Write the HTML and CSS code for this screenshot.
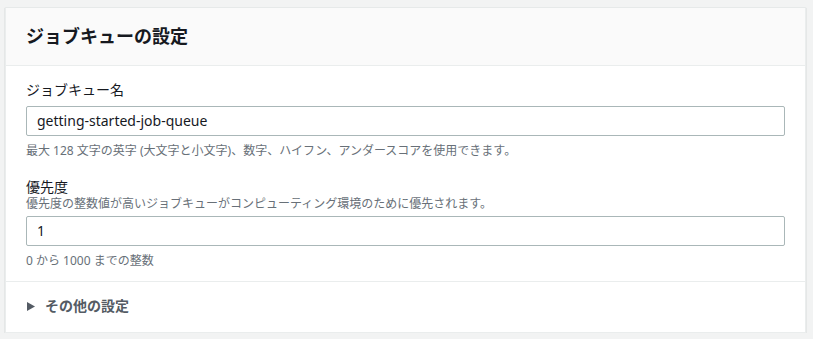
FILE: index.html
```html
<!DOCTYPE html>
<html lang="ja">
<head>
<meta charset="utf-8">
<link rel="stylesheet" href="styles.css">
</head>
<body>
<div class="card">
  <div class="card-header">
    <h2 class="title">ジョブキューの設定</h2>
  </div>
  <div class="card-body">
    <div class="field">
      <label class="label">ジョブキュー名</label>
      <div class="input">getting-started-job-queue</div>
      <div class="hint">最大 128 文字の英字 (大文字と小文字)、数字、ハイフン、アンダースコアを使用できます。</div>
    </div>
    <div class="field field-second">
      <label class="label label-tight">優先度</label>
      <div class="desc">優先度の整数値が高いジョブキューがコンピューティング環境のために優先されます。</div>
      <div class="input">1</div>
      <div class="hint">0 から 1000 までの整数</div>
    </div>
  </div>
  <div class="card-footer">
    <svg class="caret" width="8" height="9" viewBox="0 0 8 9"><polygon points="0,0 8,4.5 0,9" fill="#545b64"/></svg>
    <span class="expand">その他の設定</span>
  </div>
</div>
</body>
</html>
```

FILE: styles.css
```css
html, body {
  margin: 0;
  padding: 0;
  background: #f2f3f3;
}
body {
  padding: 7px 7px 0 5px;
  font-family: "Noto Sans", "Noto Sans CJK JP", sans-serif;
  color: #16191f;
}
.card {
  background: #fff;
  border: 1px solid #eaeded;
  border-top: 1px solid #e6e9e9;
  box-shadow: 0 1px 1px 0 rgba(0, 28, 36, 0.3);
}
.card-header {
  background: #fafafa;
  border-bottom: 1px solid #eaeded;
  padding: 17px 20px 18px 20px;
}
.title {
  margin: 0;
  font-size: 18px;
  line-height: 22px;
  font-weight: 700;
  color: #16191f;
}
.card-body {
  padding: 13px 20px 12px 20px;
  border-bottom: 1px solid #eaeded;
}
.field {
  display: flex;
  flex-direction: column;
}
.field-second {
  margin-top: 19px;
}
.label {
  font-size: 14px;
  line-height: 22px;
  margin-bottom: 5px;
}
.label-tight {
  line-height: 18px;
  margin-bottom: 0;
}
.desc {
  font-size: 12px;
  line-height: 16px;
  color: #687078;
  margin-bottom: 4px;
}
.input {
  box-sizing: border-box;
  height: 30px;
  border: 1px solid #aab7b8;
  border-radius: 2px;
  padding: 0 10px;
  font-size: 14px;
  line-height: 28px;
  color: #16191f;
}
.hint {
  font-size: 12px;
  line-height: 16px;
  color: #687078;
  margin-top: 7px;
}
.card-footer {
  display: flex;
  align-items: center;
  padding: 13px 20px 15px 21px;
  line-height: 22px;
}
.caret {
  display: block;
  margin-right: 10px;
}
.expand {
  font-size: 14px;
  font-weight: 700;
  color: #545b64;
}
```
